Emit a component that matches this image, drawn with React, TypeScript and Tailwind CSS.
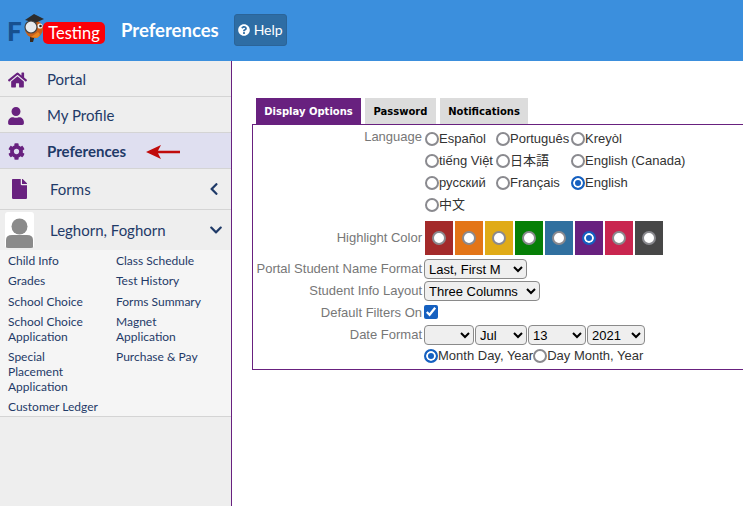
import { FaHome, FaUser, FaCog, FaFile, FaChevronLeft, FaChevronDown, FaQuestionCircle } from 'react-icons/fa';

const lato = "font-['Lato','Liberation_Sans',sans-serif]";

const languages = [
  { label: 'Español' },
  { label: 'Português' },
  { label: 'Kreyòl' },
  { label: 'tiếng Việt' },
  { label: '日本語' },
  { label: 'English (Canada)' },
  { label: 'русский' },
  { label: 'Français' },
  { label: 'English', checked: true },
  { label: '中文' },
];

const swatches = [
  { color: 'bg-[#a32a2a]' },
  { color: 'bg-[#e37517]' },
  { color: 'bg-[#e0ab17]' },
  { color: 'bg-[#067f06]' },
  { color: 'bg-[#30709f]' },
  { color: 'bg-[#68217f]', checked: true },
  { color: 'bg-[#c9264f]' },
  { color: 'bg-[#474747]' },
];

const links = [
  ['Child Info', 'Class Schedule'],
  ['Grades', 'Test History'],
  ['School Choice', 'Forms Summary'],
  ['School Choice Application', 'Magnet Application'],
  ['Special Placement Application', 'Purchase & Pay'],
  ['Customer Ledger', ''],
];

const selectClass =
  'h-5 rounded-[4px] border border-[#8a8a8a] bg-[#efefef] text-[13px] leading-none text-black';
const radioClass =
  'm-0 h-[14px] w-[14px] shrink-0 appearance-none rounded-full border-2 border-[#8a8a8f] bg-white checked:border-[#1560c0] checked:bg-[#1560c0] checked:shadow-[inset_0_0_0_2px_white]';
const labelClass = 'whitespace-nowrap pr-[2px] text-right text-[13px] leading-5 text-[#777]';

function Owl() {
  return (
    <svg width="22" height="30" viewBox="0 0 22 30" className="absolute left-[22px] top-[13px]">
      <path d="M8 22 L8 29 L11 29 L13 22 Z" fill="#3a2a1c" />
      <ellipse cx="12" cy="16" rx="9" ry="9" fill="#c9601a" />
      <path d="M16 19 Q20 22 15 25 L9 24 Z" fill="#e8851f" />
      <path d="M3 7 L12 1 L22 6 L13 10 Z" fill="#2c2c2c" />
      <circle cx="18" cy="13" r="2.6" fill="#f2f2f2" />
      <circle cx="18.5" cy="13" r="1.3" fill="#222" />
      <circle cx="9" cy="14" r="6" fill="#e6eaee" stroke="#444" strokeWidth="1.2" />
    </svg>
  );
}

function NavRow({ icon, label, active }: { icon: React.ReactNode; label: string; active?: boolean }) {
  return (
    <div
      className={`flex h-9 items-center border-b border-[#d4d4d4] pl-2 pt-[2px] text-[15px] text-[#1f3a68] ${
        active ? 'bg-[#dfdff0] font-bold' : ''
      }`}
    >
      <span className="flex w-[39px] text-[#68217f]">{icon}</span>
      {label}
    </div>
  );
}

export default function App() {
  return (
    <div className="h-[506px] w-[743px] overflow-hidden bg-white">
      {/* Header */}
      <header className={`flex h-[61px] items-center bg-[#3b8fdd] ${lato}`}>
        <div className="relative h-full w-[121px]">
          <span className="absolute left-[7px] top-[14px] text-[26px] font-black leading-[34px] text-[#17508f]">F</span>
          <Owl />
          <span className="absolute left-[43px] top-[22px] flex h-[22px] w-[62px] items-center justify-center rounded-[5px] bg-[#fb0007] text-[16.5px] text-white">
            Testing
          </span>
        </div>
        <h1 className="mr-[15px] text-[18.5px] font-bold text-white">Preferences</h1>
        <button className="mb-[2px] flex h-8 w-[53px] items-center justify-center gap-1 rounded-[3px] border border-[#2b6498] bg-[#2e6da4] text-[14px] text-white">
          <FaQuestionCircle className="h-3 w-3" />
          Help
        </button>
      </header>

      <div className="flex h-[445px]">
        {/* Sidebar */}
        <aside className={`w-[232px] shrink-0 border-r border-[#68217f] bg-[#eeeeee] ${lato}`}>
          <NavRow icon={<FaHome className="h-[18px] w-[19px]" />} label="Portal" />
          <NavRow icon={<FaUser className="h-[18px] w-4" />} label="My Profile" />
          <div className="relative">
            <NavRow icon={<FaCog className="h-[17px] w-[17px]" />} label="Preferences" active />
            <svg width="36" height="14" viewBox="0 0 36 14" className="absolute left-[146px] top-[12px]">
              <path d="M0 7 L15 0 L12 5.8 H34 V8.2 H12 L15 14 Z" fill="#c00b0b" />
            </svg>
          </div>
          <div className="flex h-[41px] items-center border-b border-[#d4d4d4] pl-[11px] pr-2 text-[15px] text-[#1f3a68]">
            <FaFile className="h-[20px] w-[17px] text-[#68217f]" />
            <span className="ml-[22px] flex-1">Forms</span>
            <FaChevronLeft className="mr-[2px] h-[14px] w-[14px] text-[#1f3a68]" />
          </div>
          <div className="flex h-10 items-center pl-[5px] pr-2 text-[15px] text-[#1f3a68]">
            <div className="flex h-9 w-[29px] items-end justify-center overflow-hidden rounded-[3px] bg-white">
              <svg width="27" height="31" viewBox="0 0 27 31">
                <circle cx="13.5" cy="9.5" r="8" fill="#8a8a8a" />
                <path d="M0 31 V23 Q0 18 6 18 H21 Q27 18 27 23 V31 Z" fill="#8a8a8a" />
              </svg>
            </div>
            <span className="ml-4 flex-1">Leghorn, Foghorn</span>
            <FaChevronDown className="h-[14px] w-[14px] text-[#1f3a68]" />
          </div>
          <div className="grid grid-cols-[108px_108px] gap-y-[5.3px] border-b border-[#d4d4d4] bg-[#f5f5f5] pb-[2px] pl-2 pt-[3px] text-[12px] leading-[15px] text-[#1f3a68]">
            {links.flat().map((link, i) => (
              <span key={i} className="max-w-[91px]">
                {link}
              </span>
            ))}
          </div>
        </aside>

        {/* Content */}
        <main className="min-w-0 flex-1 pl-5 pt-[37px] font-['Liberation_Sans',Arial,sans-serif] text-[13px] text-[#333]">
          {/* Tabs */}
          <div className="ml-1 flex h-[26px] gap-[4px] font-['DejaVu_Sans',sans-serif] text-[10px] font-bold">
            <div className="flex w-[105px] items-center justify-center bg-[#68217f] text-white">Display Options</div>
            <div className="flex w-[71px] items-center justify-center bg-[#dcdcdc] text-black">Password</div>
            <div className="flex w-[88px] items-center justify-center bg-[#dcdcdc] text-black">Notifications</div>
          </div>

          {/* Panel */}
          <div className="grid h-[246px] w-[520px] grid-cols-[171px_1fr] content-start border border-[#68217f] pt-[3px]">
            <div className={`${labelClass} -mt-px h-[89px]`}>Language</div>
            <div className="ml-px grid h-[88px] grid-cols-[71px_75px_1fr] auto-rows-[22px]">
              {languages.map((lang) => (
                <label key={lang.label} className="flex items-center whitespace-nowrap font-['Liberation_Sans','Noto_Sans_CJK_JP',sans-serif]">
                  <input type="radio" name="language" defaultChecked={lang.checked} className={radioClass} />
                  {lang.label}
                </label>
              ))}
            </div>

            <div className={`${labelClass} mt-[5px] flex h-[34px] items-center justify-end`}>Highlight Color</div>
            <div className="ml-px mt-[5px] flex h-[34px] gap-[2px]">
              {swatches.map((s, i) => (
                <label key={i} className={`flex h-[34px] w-[28px] items-center justify-center ${s.color}`}>
                  <input type="radio" name="color" defaultChecked={s.checked} className={radioClass} />
                </label>
              ))}
            </div>

            <div className={`${labelClass} mt-1 h-5`}>Portal Student Name Format</div>
            <div className="mt-1 h-5">
              <select className={`${selectClass} w-[103px]`} defaultValue="a">
                <option value="a">Last, First M</option>
              </select>
            </div>

            <div className={`${labelClass} mt-[2px] h-5`}>Student Info Layout</div>
            <div className="mt-[2px] h-5">
              <select className={`${selectClass} w-[116px]`} defaultValue="a">
                <option value="a">Three Columns</option>
              </select>
            </div>

            <div className={`${labelClass} mt-[2px] h-[18px]`}>Default Filters On</div>
            <div className="mt-[2px] flex h-[18px] items-center">
              <input type="checkbox" defaultChecked className="m-0 h-[14px] w-[14px] accent-[#1560c0]" />
            </div>

            <div className={`${labelClass} mt-1 h-5`}>Date Format</div>
            <div className="mt-1 flex h-5">
              <select className={`${selectClass} w-[50px]`} />
              <select className={`${selectClass} ml-px w-[52px]`} defaultValue="Jul">
                <option>Jul</option>
              </select>
              <select className={`${selectClass} ml-px w-[58px]`} defaultValue="13">
                <option>13</option>
              </select>
              <select className={`${selectClass} ml-px w-[58px]`} defaultValue="2021">
                <option>2021</option>
              </select>
            </div>

            <div />
            <div className="mt-px flex h-5 items-center whitespace-nowrap">
              <input type="radio" name="date" defaultChecked className={radioClass} />
              Month Day, Year
              <input type="radio" name="date" className={radioClass} />
              Day Month, Year
            </div>
          </div>
        </main>
      </div>
    </div>
  );
}
